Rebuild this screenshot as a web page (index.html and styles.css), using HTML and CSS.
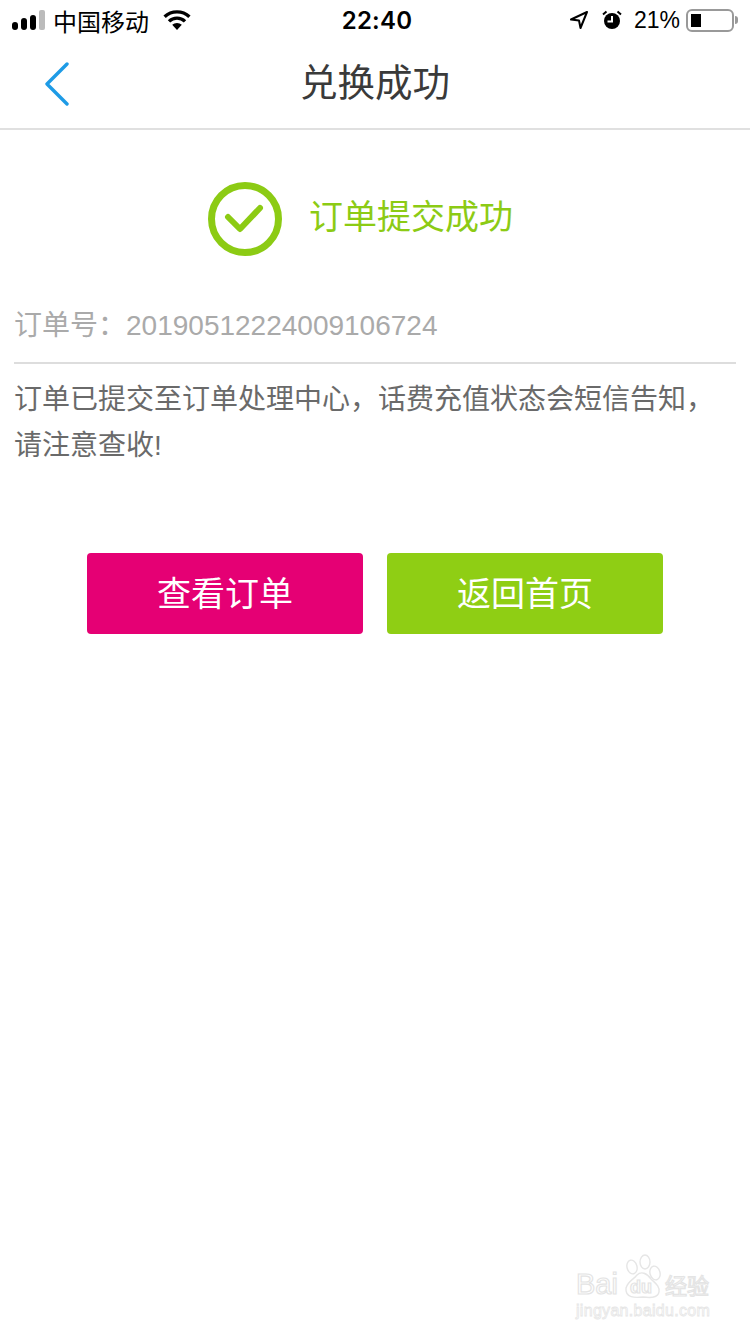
FILE: index.html
```html
<!DOCTYPE html>
<html lang="zh-CN">
<head>
  <meta charset="UTF-8">
  <meta name="viewport" content="width=device-width, initial-scale=1.0">
  <title>兑换成功</title>
  <link rel="stylesheet" href="styles.css">
</head>
<body>
  <div class="page">
    <!-- status bar -->
    <div class="status-bar">
      <div class="status-left">
        <div class="signal">
          <span class="bar bar-1"></span>
          <span class="bar bar-2"></span>
          <span class="bar bar-3"></span>
          <span class="bar bar-4"></span>
        </div>
        <span class="carrier">中国移动</span>
        <svg class="wifi" width="28" height="20" viewBox="0 0 28 20">
          <path d="M14 20 L9.2 14.8 A7 7 0 0 1 18.8 14.8 Z" fill="#000"/>
          <path d="M6 11.4 A11.5 11.5 0 0 1 22 11.4" fill="none" stroke="#000" stroke-width="3.4"/>
          <path d="M1.6 6.8 A18 18 0 0 1 26.4 6.8" fill="none" stroke="#000" stroke-width="3.4"/>
        </svg>
      </div>
      <div class="status-time">22:40</div>
      <div class="status-right">
        <svg class="location" width="20" height="20" viewBox="0 0 20 20">
          <path d="M18 2 L2 9.5 L10 10.5 L11.5 18 Z" fill="none" stroke="#000" stroke-width="2" stroke-linejoin="round"/>
        </svg>
        <svg class="alarm" width="20" height="20" viewBox="0 0 20 20">
          <circle cx="10" cy="11" r="8" fill="#000"/>
          <path d="M10 6 V11.5 H5.5" fill="none" stroke="#fff" stroke-width="2"/>
          <path d="M1 4.5 L4.5 1.5 M19 4.5 L15.5 1.5" stroke="#000" stroke-width="2"/>
        </svg>
        <span class="battery-text">21%</span>
        <div class="battery">
          <div class="battery-body"><div class="battery-level"></div></div>
          <div class="battery-tip"></div>
        </div>
      </div>
    </div>

    <!-- nav -->
    <div class="nav">
      <svg class="back" width="26" height="44" viewBox="0 0 26 44">
        <path d="M23 2 L3 22 L23 42" fill="none" stroke="#1e9be6" stroke-width="3.4" stroke-linecap="round" stroke-linejoin="round"/>
      </svg>
      <h1 class="nav-title">兑换成功</h1>
    </div>

    <div class="result">
      <svg class="result-icon" width="74" height="74" viewBox="0 0 74 74">
        <circle cx="37" cy="37" r="33.5" fill="none" stroke="#8ccb14" stroke-width="7"/>
        <path d="M20 35 L32 47 L52 26" fill="none" stroke="#8ccb14" stroke-width="6" stroke-linecap="round" stroke-linejoin="round"/>
      </svg>
      <span class="result-text">订单提交成功</span>
    </div>

    <div class="content">
      <div class="order-no">订单号&#xFF1A;<span class="order-num">20190512224009106724</span></div>
      <p class="desc">订单已提交至订单处理中心&#xFF0C;话费充值状态会短信告知&#xFF0C;请注意查收!</p>
    </div>

    <div class="actions">
      <div class="btn btn-pink">查看订单</div>
      <div class="btn btn-green">返回首页</div>
    </div>

    <!-- watermark -->
    <div class="watermark">
      <svg class="paw" width="40" height="48" viewBox="0 0 40 48">
        <g fill="#fff" stroke="#e6e6e6" stroke-width="1.4">
          <ellipse cx="9" cy="15" rx="5" ry="7" transform="rotate(-15 9 15)"/>
          <ellipse cx="22" cy="10" rx="5" ry="7"/>
          <ellipse cx="32" cy="21" rx="5" ry="7" transform="rotate(-15 32 21)"/>
          <path d="M3 36 C5 29 10 28 14 23 C18 19 24 21 28 27 C32 31 37 34 36 40 C35 46 28 46 20 45 C12 46 2 46 3 36 Z"/>
        </g>
      </svg>
      <div class="wm-line">
        <span class="wm-bai">Bai</span><span class="wm-du">du</span><span class="wm-cn">经验</span>
      </div>
      <div class="wm-url">jingyan.baidu.com</div>
    </div>
  </div>
</body>
</html>
```

FILE: styles.css
```css
* {
  box-sizing: border-box;
}

body {
  margin: 0;
  background: #fff;
  font-family: "Liberation Sans", "Noto Sans CJK SC", sans-serif;
}

.page {
  position: relative;
  width: 750px;
  height: 1334px;
  overflow: hidden;
}

.status-bar {
  display: flex;
  justify-content: space-between;
  align-items: center;
  height: 40px;
  padding: 0 12px;
  color: #000;
  font-size: 24px;
  position: relative;
}

.status-left,
.status-right {
  display: flex;
  align-items: center;
}

.signal {
  display: flex;
  align-items: flex-end;
  gap: 3px;
  height: 20px;
  margin-right: 8px;
}

.bar {
  width: 6px;
  background: #000;
  border-radius: 3px;
}

.bar-1 { height: 8px; }
.bar-2 { height: 12px; }
.bar-3 { height: 15px; }
.bar-4 { height: 20px; background: #bbb; border-radius: 2px; }

.wifi {
  margin-left: 14px;
}

.status-time {
  position: absolute;
  left: 4px;
  right: 0;
  text-align: center;
  font-family: Inter, "Liberation Sans", sans-serif;
  font-size: 24px;
  font-weight: 600;
  letter-spacing: 0.2px;
}

.location {
  margin-right: 13px;
}

.alarm {
  margin-right: 12px;
}

.battery-text {
  margin-right: 6px;
  font-size: 23px;
}

.battery {
  display: flex;
  align-items: center;
}

.battery-body {
  width: 48px;
  height: 23px;
  border: 2px solid #999;
  border-radius: 6px;
  padding: 3px;
}

.battery-level {
  width: 10px;
  height: 100%;
  background: #000;
}

.battery-tip {
  width: 3px;
  height: 8px;
  margin-left: 1px;
  background: #999;
  border-radius: 0 3px 3px 0;
}

.nav {
  position: relative;
  display: flex;
  align-items: center;
  justify-content: center;
  height: 90px;
  padding-bottom: 10px;
  border-bottom: 2px solid #e0e0e0;
}

.back {
  position: absolute;
  left: 44px;
  top: 22px;
}

.nav-title {
  margin: 0;
  font-size: 37.5px;
  font-weight: normal;
  color: #3a3a3a;
}

.result {
  display: flex;
  align-items: center;
  justify-content: center;
  gap: 27px;
  margin-top: 52px;
  padding-right: 29px;
}

.result-text {
  padding-bottom: 10px;
  font-size: 34px;
  color: #8ccb14;
}

.content {
  margin: 48px 14px 0;
}

.order-no {
  height: 60px;
  line-height: 44px;
  font-size: 28px;
  color: #aaa;
  border-bottom: 2px solid #ddd;
}

.desc {
  margin: 13px 0 0;
  font-size: 28px;
  line-height: 46px;
  color: #6a6a6a;
}

.actions {
  display: flex;
  justify-content: center;
  gap: 24px;
  margin-top: 84px;
}

.btn {
  width: 276px;
  height: 81px;
  line-height: 83px;
  border-radius: 4px;
  text-align: center;
  font-size: 34px;
  color: #fff;
}

.btn-pink {
  background: #e50074;
}

.btn-green {
  background: #8fce14;
}

.watermark {
  position: absolute;
  left: 576px;
  top: 1252px;
  width: 140px;
  color: #fff;
}

.paw {
  position: absolute;
  left: 47px;
  top: 0;
}

.wm-line {
  position: relative;
  margin-top: 14px;
  height: 36px;
  display: flex;
  align-items: center;
  white-space: nowrap;
  -webkit-text-stroke: 1.2px #e4e4e4;
}

.wm-bai {
  font-size: 29px;
}

.wm-du {
  margin: 6px 13px 0 12px;
  font-size: 18px;
  font-weight: bold;
}

.wm-cn {
  font-size: 22px;
}

.wm-url {
  position: relative;
  font-size: 16px;
  letter-spacing: 0.3px;
  white-space: nowrap;
  -webkit-text-stroke: 0.8px #e6e6e6;
}
```
